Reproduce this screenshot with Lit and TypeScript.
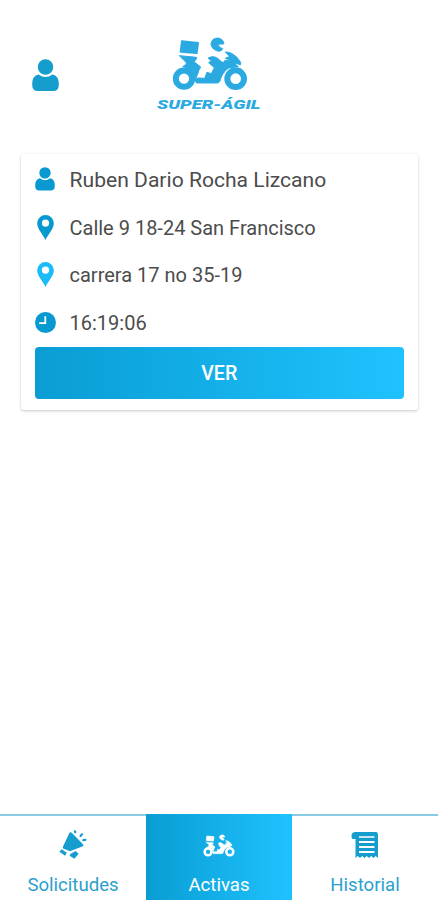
import { LitElement, html, css, svg } from "lit";
import { customElement } from "lit/decorators.js";

// Delivery motorbike, drawn on a 252 x 180 grid.
const bike = svg`
  <g fill="currentColor" stroke="currentColor" stroke-linejoin="round" stroke-linecap="round">
    <path stroke-width="6" d="M42 22 L90 27 L86 57 L38 53Z"/>
    <path stroke-width="3" d="M35 65 L86 70 Q85 79 78 83 L98 99 Q91 110 89 120 L83 134 Q80 110 54 101 L44 98 L56 90 Q54 82 47 78Z"/>
    <path stroke-width="3" d="M121 72 Q136 63 150 74 L164 86 L196 91 L178 105 Q162 117 155 143 L149 147 H86 L80 138 L89 132 L110 133 L117 115 L130 119 L139 101 L122 86 L129 80Z"/>
    <path stroke-width="3" d="M173 54 Q187 52 207 70 L218 85 V92 L198 87 L211 98 L176 102 L164 88 L170 80 L190 80 L172 73 L184 68Z"/>
    <path stroke-width="2" d="M129 31 C129 17 139 11 151 12 C161 13 168 21 168 30 L152 31 Q150 38 159 41 L165 44 Q159 54 150 52 Q130 46 129 31Z"/>
  </g>
  <g fill="none" stroke="currentColor" stroke-width="18">
    <circle cx="48" cy="134" r="24.5"/><circle cx="203" cy="134" r="25"/>
  </g>`;

const person = html`<svg viewBox="0 0 20 24"><g fill="currentColor"><circle cx="10" cy="6" r="5.8"/><path d="M4.8 11.6 Q10 15.4 15.2 11.6 Q20 12.5 20 19 Q20 24 16.5 24 H3.5 Q0 24 0 19 Q0 12.5 4.8 11.6Z"/></g></svg>`;
const pin = html`<svg viewBox="0 0 16 24"><path fill="currentColor" fill-rule="evenodd" d="M8 0A8 8 0 0 0 0 8C0 13 5 18 8 24C11 18 16 13 16 8A8 8 0 0 0 8 0ZM8 4.2A3.5 3.5 0 1 1 8 11.2A3.5 3.5 0 1 1 8 4.2Z"/></svg>`;
const clock = html`<svg viewBox="0 0 20 20"><circle cx="10" cy="10" r="10" fill="currentColor"/><path d="M9.8 4V10.5H4" fill="none" stroke="#fff" stroke-width="1.7"/></svg>`;
const horn = html`<svg viewBox="0 0 28 30"><g fill="currentColor"><path d="M10.6 2.6Q11.6 1.6 12.8 2.8L24 14.3Q24.7 15.8 23.3 16.4L11 21.2 4.2 18.4Q3.6 18 3.8 17Z"/><path d="M2.6 19.2L7.8 22.8 6.1 25.8.4 21.7Z"/><path d="M11.4 24L16.5 21 19.6 23.8 15.4 28.8 10.6 25.8Z"/></g><path d="M16.3 2.3L16 1.4M21.5 6L23 4.3M24.3 10.2L26.4 9.8" fill="none" stroke="currentColor" stroke-width="2.2" stroke-linecap="round"/></svg>`;
const receipt = html`<svg viewBox="0 0 28 28"><path fill="currentColor" fill-rule="evenodd" d="M4 1H25Q27 1 27 4V27L24.7 25 22.5 27 20.2 25 18 27 15.7 25 13.5 27 11.2 25 9 27 6.7 25 4.5 27V8H1.5Q.5 7.5 .5 5Q.5 1.5 4 1ZM8 5.2V6.8H23.5V5.2ZM8 10V12H23.5V10ZM8 15V17H23.5V15ZM8 20V22H23.5V20Z"/></svg>`;

@customElement("app-root")
export class AppRoot extends LitElement {
  static styles = css`
    :host { display: flex; flex-direction: column; height: 900px; background: #fff; font-family: Roboto, sans-serif; color: #4c4c4c; overflow: hidden; }
    svg { display: block; width: 100%; height: 100%; overflow: visible; }
    header { display: flex; gap: 98px; height: 154px; flex: none; box-sizing: border-box; padding: 38px 0 0 32px; }
    .profile { width: 27px; height: 32px; margin-top: 21px; color: #149dcd; }
    .logo { color: #2baae2; width: 104px; height: 76px; }
    .wordmark { font: italic 900 13.4px Roboto, sans-serif; fill: currentColor; }
    .card { margin: 0 20px 0 21px; height: 256px; box-sizing: border-box; padding: 2px 14px 0 13.5px; border-radius: 3px; background: #fff; box-shadow: 0 1px 3px rgba(0,0,0,.22); flex: none; }
    .row { display: flex; align-items: center; height: 47.8px; font-size: 20px; }
    .row.name { font-size: 21.1px; }
    .row.time { height: 47.6px; }
    .icon { width: 21px; display: flex; justify-content: center; margin-right: 14px; color: #0799cf; }
    .icon.bright { color: #1bbdf8; }
    .person { width: 20px; height: 23.5px; margin-top: -2px; }
    .pin { width: 17px; height: 25px; margin-top: -1px; }
    .clock { width: 21px; height: 21px; margin-top: -1px; }
    button { display: block; width: 100%; height: 52.5px; padding: 1px 0 0; border: 0; border-radius: 4px; background: linear-gradient(90deg, #099dd3, #1fc2ff); color: #fff; font: 500 19.6px Roboto, sans-serif; }
    nav { display: grid; grid-template-columns: 146px 146px 1fr; height: 86px; margin-top: auto; flex: none; color: #2b9fce; }
    .tab { display: flex; flex-direction: column; align-items: center; border-top: 2px solid #8acbe4; font-size: 18.6px; box-sizing: border-box; }
    .tab.active { color: #fff; border-color: transparent; background: linear-gradient(90deg, #099dd3, #1fc2ff) border-box; }
    .glyph { height: 57px; display: flex; align-items: center; justify-content: center; color: #149dcd; }
    .active .glyph { color: #fff; }
    .horn { width: 28px; height: 30px; margin-top: 1px; }
    .bike { width: 32px; height: 23px; margin-top: 2px; }
    .receipt { width: 28px; height: 28px; }
    .label { line-height: 25px; }
  `;

  render() {
    return html`
      <header>
        <div class="profile">${person}</div>
        <div class="logo"><svg viewBox="0 0 104 76">
          <g transform="translate(11 -4) scale(.3333)">${bike}</g>
          <text class="wordmark" x="0" y="71" textLength="103.5" lengthAdjust="spacingAndGlyphs">SUPER-ÁGIL</text>
        </svg></div>
      </header>
      <section class="card">
        <div class="row name"><span class="icon"><span class="person">${person}</span></span><span>Ruben Dario Rocha Lizcano</span></div>
        <div class="row"><span class="icon"><span class="pin">${pin}</span></span><span>Calle 9 18-24 San Francisco</span></div>
        <div class="row"><span class="icon bright"><span class="pin">${pin}</span></span><span>carrera 17 no 35-19</span></div>
        <div class="row time"><span class="icon"><span class="clock">${clock}</span></span><span>16:19:06</span></div>
        <button>VER</button>
      </section>
      <nav>
        <div class="tab"><span class="glyph"><span class="horn">${horn}</span></span><span class="label">Solicitudes</span></div>
        <div class="tab active"><span class="glyph"><span class="bike"><svg viewBox="12 8 228 162">${bike}</svg></span></span><span class="label">Activas</span></div>
        <div class="tab"><span class="glyph"><span class="receipt">${receipt}</span></span><span class="label">Historial</span></div>
      </nav>`;
  }
}
